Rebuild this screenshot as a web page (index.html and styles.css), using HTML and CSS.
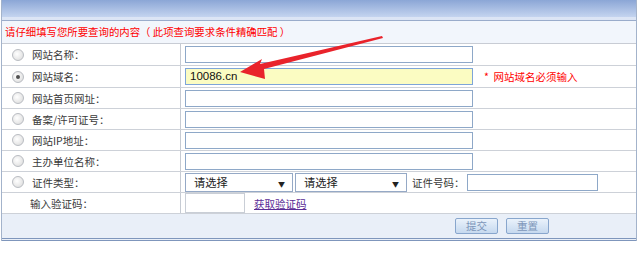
FILE: index.html
```html
<!DOCTYPE html>
<html>
  <head>
    <title>网站备案查询</title>
    <link rel="stylesheet" href="styles.css">
  </head>
  <body>
    <div class="panel">
      <div class="panel-head"></div>
      <div class="panel-title">请仔细填写您所要查询的内容（ 此项查询要求条件精确匹配 ）</div>

      <div class="row row-tall">
        <div class="row-label"><span class="radio"></span>网站名称：</div>
        <div class="row-field"><span class="input input-long"></span></div>
      </div>
      <div class="row row-tall">
        <div class="row-label"><span class="radio checked"></span>网站域名：</div>
        <div class="row-field">
          <span class="input input-long input-active">10086.cn</span>
          <span class="hint">*&nbsp; 网站域名必须输入</span>
        </div>
      </div>
      <div class="row">
        <div class="row-label"><span class="radio"></span>网站首页网址：</div>
        <div class="row-field"><span class="input input-long"></span></div>
      </div>
      <div class="row">
        <div class="row-label"><span class="radio"></span>备案/许可证号：</div>
        <div class="row-field"><span class="input input-long"></span></div>
      </div>
      <div class="row">
        <div class="row-label"><span class="radio"></span>网站IP地址：</div>
        <div class="row-field"><span class="input input-long"></span></div>
      </div>
      <div class="row">
        <div class="row-label"><span class="radio"></span>主办单位名称：</div>
        <div class="row-field"><span class="input input-long"></span></div>
      </div>
      <div class="row">
        <div class="row-label"><span class="radio"></span>证件类型：</div>
        <div class="row-field">
          <span class="select select-a">请选择<i class="caret">▼</i></span>
          <span class="select select-b">请选择<i class="caret">▼</i></span>
          <span class="field-label">证件号码：</span>
          <span class="input input-id"></span>
        </div>
      </div>
      <div class="row">
        <div class="row-label"><span class="radio-space"></span>输入验证码：</div>
        <div class="row-field">
          <span class="input input-code"></span>
          <a class="code-link" href="#">获取验证码</a>
        </div>
      </div>

      <div class="panel-foot">
        <span class="btn">提交</span>
        <span class="btn">重置</span>
      </div>
    </div>

    <svg class="arrow" width="638" height="265" viewBox="0 0 638 265">
      <polygon points="240,72 262,59 260,64 382,36 383,38 264,69 265,79" fill="#e9232b"/>
    </svg>
  </body>
</html>
```

FILE: styles.css
```css
body {
  margin: 0;
  font-family: "Noto Sans CJK SC", sans-serif;
  font-size: 10.5px;
  color: #3a3a3a;
  background: #fff;
  position: relative;
}

.panel {
  width: 634px;
  margin-left: 1px;
  border-left: 1px solid #a3b3cb;
  border-right: 1px solid #a3b3cb;
}

.panel-head {
  height: 17px;
  background: linear-gradient(#8ba6d6, #c4d4ef);
  border-bottom: 3px solid #dce5f5;
}

.panel-title {
  height: 22px;
  line-height: 22px;
  padding-left: 3px;
  color: #f00;
  font-size: 10.4px;
  background: #f2f6fc;
  border-top: 1px solid #9aaccb;
  border-bottom: 1px solid #c8ccd4;
}

.row {
  display: flex;
  height: 20px;
  border-bottom: 1px solid #cdd1d8;
}

.row-tall {
  height: 21px;
}

.row-label {
  width: 179px;
  display: flex;
  align-items: center;
  padding-left: 10px;
  box-sizing: border-box;
  border-right: 1px solid #c6cbd3;
}

.radio,
.radio-space {
  width: 12px;
  height: 12px;
  margin-right: 8px;
  box-sizing: border-box;
  flex: none;
}

.radio {
  border: 1px solid #b9bcc2;
  border-radius: 50%;
  background: radial-gradient(circle at 40% 40%, #fff, #d8d8d8);
  position: relative;
}

.radio.checked::after {
  content: "";
  position: absolute;
  left: 3px;
  top: 3px;
  width: 4px;
  height: 4px;
  border-radius: 50%;
  background: #505050;
}

.radio-space {
  margin-right: 6px;
}

.row-field {
  display: flex;
  align-items: center;
  padding-left: 4px;
  flex: 1;
}

.input {
  display: inline-block;
  height: 17px;
  box-sizing: border-box;
  border: 1px solid #8ea8c8;
  background: #fff;
}

.input-long {
  width: 288px;
}

.input-active {
  background: #fbfcc2;
  border-color: #7ea5d8;
  font-family: "Liberation Sans", sans-serif;
  font-size: 11.5px;
  color: #111;
  line-height: 15px;
  padding-left: 4px;
}

.hint {
  color: #f00;
  margin-left: 11px;
}

.select {
  display: inline-flex;
  align-items: center;
  height: 19px;
  box-sizing: border-box;
  border: 1px solid #95a9c6;
  background: #fff;
  padding-left: 8px;
  font-size: 11.2px;
  color: #222;
  position: relative;
}

.select-a {
  width: 108px;
}

.select-b {
  width: 112px;
  margin-left: 2px;
}

.caret {
  font-style: normal;
  font-size: 7px;
  position: absolute;
  right: 7px;
  top: 5px;
  color: #222;
}

.field-label {
  margin-left: 5px;
  margin-right: 2px;
}

.input-id {
  width: 131px;
}

.input-code {
  width: 60px;
  height: 20px;
  border-color: #c9ced6;
}

.code-link {
  margin-left: 9px;
  color: #5b2c96;
}

.panel-foot {
  display: flex;
  align-items: center;
  gap: 8px;
  height: 24px;
  padding-left: 453px;
  background: #e9eff8;
  border-bottom: 3px double #7f96bc;
}

.btn {
  width: 43px;
  height: 16px;
  box-sizing: border-box;
  border: 1px solid #88a6cd;
  border-radius: 2px;
  background: linear-gradient(#eaf2fb, #c6d9ef);
  color: #7d96ba;
  font-size: 10.5px;
  text-align: center;
  line-height: 14px;
}

.arrow {
  position: absolute;
  left: 0;
  top: 0;
  pointer-events: none;
}
```
